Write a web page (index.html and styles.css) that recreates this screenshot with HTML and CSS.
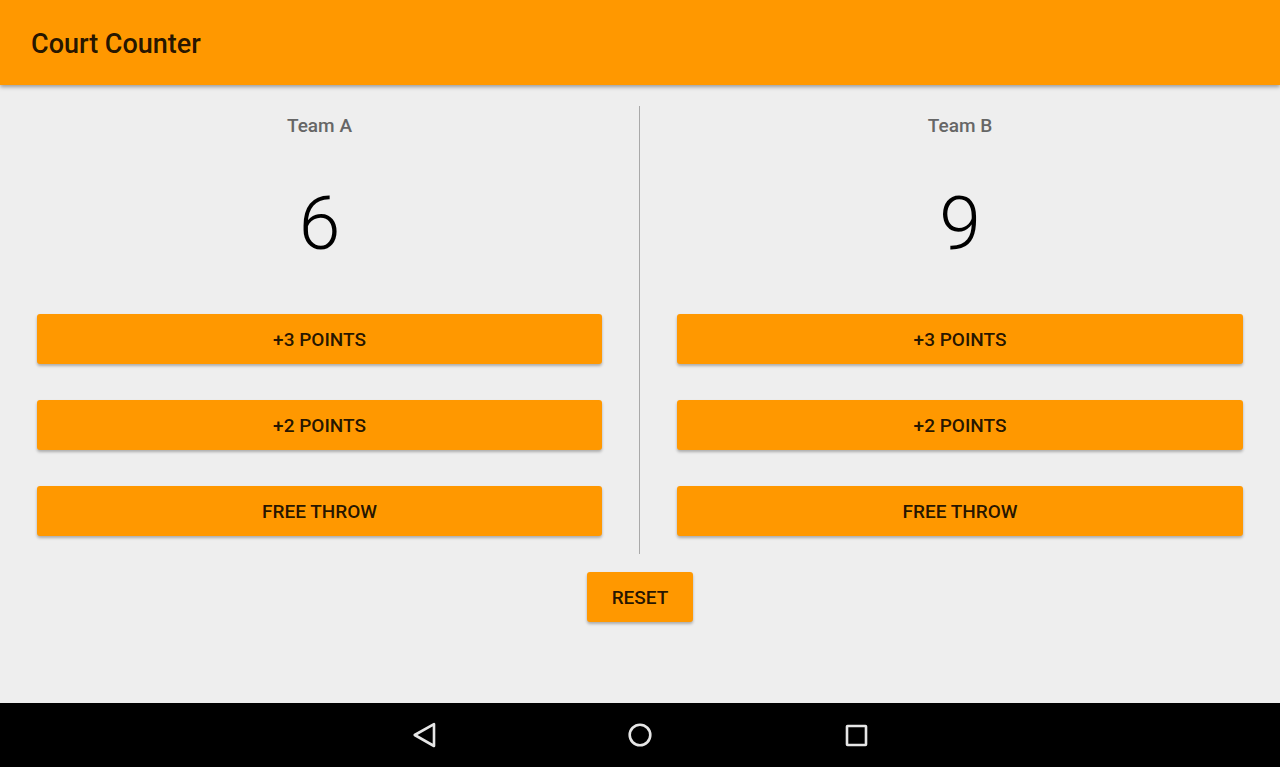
FILE: index.html
```html
<!DOCTYPE html>
<html lang="en">
<head>
<meta charset="utf-8">
<meta name="viewport" content="width=device-width, initial-scale=1">
<title>Court Counter</title>
<link rel="stylesheet" href="styles.css">
</head>
<body>
<header class="app-bar"><h1 class="app-title">Court Counter</h1></header>
<main class="content">
  <div class="teams">
    <section class="team">
      <h2 class="team-name">Team A</h2>
      <p class="score">6</p>
      <button class="btn" type="button">+3 POINTS</button>
      <button class="btn" type="button">+2 POINTS</button>
      <button class="btn" type="button">FREE THROW</button>
    </section>
    <section class="team">
      <h2 class="team-name">Team B</h2>
      <p class="score">9</p>
      <button class="btn" type="button">+3 POINTS</button>
      <button class="btn" type="button">+2 POINTS</button>
      <button class="btn" type="button">FREE THROW</button>
    </section>
  </div>
  <button class="btn btn-reset" type="button">RESET</button>
</main>
<nav class="nav-bar" aria-label="System">
  <button class="nav-btn" type="button" aria-label="Back"><svg width="32" height="32" viewBox="0 0 32 32"><path d="M26 5.2v21.8L6.7 16z"/></svg></button>
  <button class="nav-btn" type="button" aria-label="Home"><svg width="32" height="32" viewBox="0 0 32 32"><circle cx="16" cy="16" r="10.3"/></svg></button>
  <button class="nav-btn" type="button" aria-label="Overview"><svg width="32" height="32" viewBox="0 0 32 32"><rect x="7" y="7" width="19" height="19" rx="0.5"/></svg></button>
</nav>
</body>
</html>
```
FILE: styles.css
```css
* { box-sizing: border-box; }
body {
  margin: 0;
  min-height: 100vh;
  display: flex;
  flex-direction: column;
  background: #eeeeee;
  color: #000;
  font-family: Roboto, sans-serif;
}
.app-bar {
  display: flex;
  align-items: center;
  padding: 28px 31px 25px;
  background: #ff9800;
  box-shadow: 0 2px 4px rgba(0, 0, 0, 0.35);
}
.app-title {
  margin: 0;
  font-size: 27px;
  line-height: 32px;
  font-weight: 500;
  color: rgba(0, 0, 0, 0.87);
}
.content {
  flex: 1;
  display: flex;
  flex-direction: column;
  align-items: center;
  padding-top: 21px;
}
.teams {
  display: grid;
  grid-template-columns: 1fr 1fr;
  align-self: stretch;
}
.team {
  display: flex;
  flex-direction: column;
  gap: 36px;
  padding: 8px 37px 18px;
}
.team:first-child { border-right: 1px solid #a9a9a9; }
.team-name {
  margin: 0;
  text-align: center;
  font-size: 19px;
  line-height: 24px;
  font-weight: 500;
  color: #666;
}
.score {
  margin: 0 0 6px;
  text-align: center;
  font-size: 75px;
  line-height: 98px;
  font-weight: 300;
}
.btn {
  height: 50px;
  padding: 2px 25px 0;
  border: 0;
  border-radius: 3px;
  background: #ff9800;
  box-shadow: 0 2px 3px rgba(0, 0, 0, 0.28);
  color: rgba(0, 0, 0, 0.87);
  font: 500 19px/24px Roboto, sans-serif;
}
.btn-reset { margin-top: 18px; }
.nav-bar {
  display: flex;
  justify-content: center;
  gap: 184px;
  padding: 16px 0;
  background: #000;
}
.nav-btn { padding: 0; border: 0; background: none; display: flex; }
.nav-btn svg { fill: none; stroke: #e6e6e6; stroke-width: 2.6; stroke-linejoin: round; }
```
